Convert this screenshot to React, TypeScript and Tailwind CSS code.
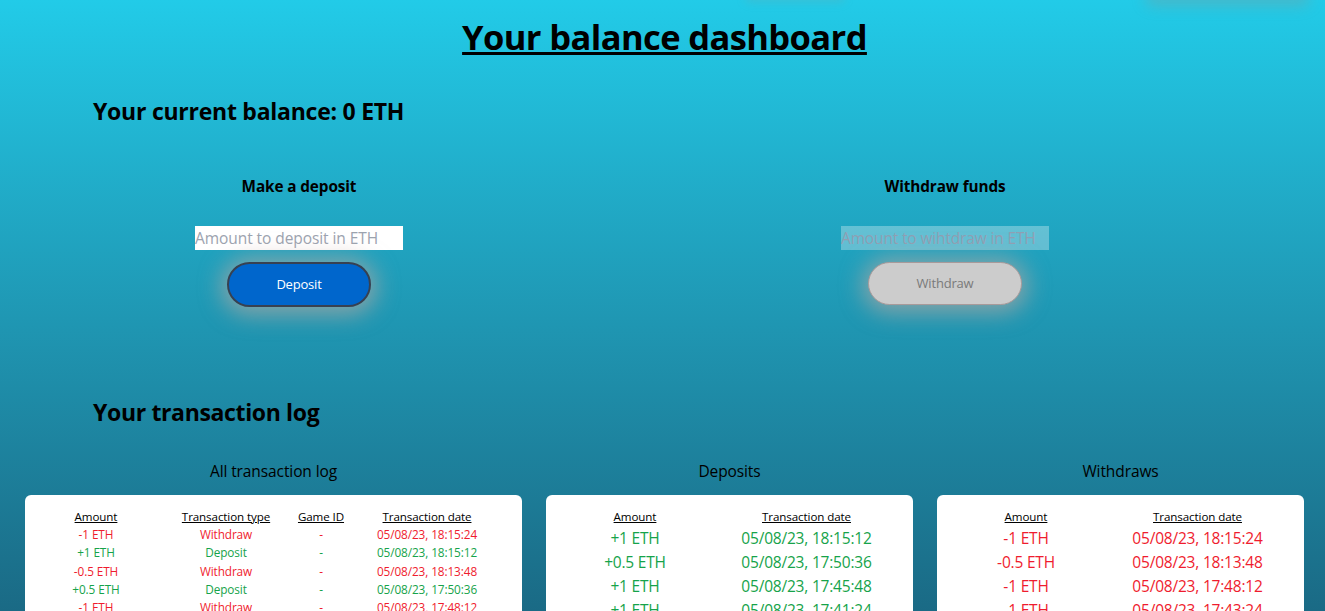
import React from "react";

interface Tx {
  amount: string;
  type: string;
  date: string;
}

const allTx: Tx[] = [
  { amount: "-1 ETH", type: "Withdraw", date: "05/08/23, 18:15:24" },
  { amount: "+1 ETH", type: "Deposit", date: "05/08/23, 18:15:12" },
  { amount: "-0.5 ETH", type: "Withdraw", date: "05/08/23, 18:13:48" },
  { amount: "+0.5 ETH", type: "Deposit", date: "05/08/23, 17:50:36" },
  { amount: "-1 ETH", type: "Withdraw", date: "05/08/23, 17:48:12" },
];

const deposits = [
  ["+1 ETH", "05/08/23, 18:15:12"],
  ["+0.5 ETH", "05/08/23, 17:50:36"],
  ["+1 ETH", "05/08/23, 17:45:48"],
  ["+1 ETH", "05/08/23, 17:41:24"],
];

const withdraws = [
  ["-1 ETH", "05/08/23, 18:15:24"],
  ["-0.5 ETH", "05/08/23, 18:13:48"],
  ["-1 ETH", "05/08/23, 17:48:12"],
  ["-1 ETH", "05/08/23, 17:43:24"],
];

const SmallTable = ({ rows, color }: { rows: string[][]; color: string }) => (
  <div className="bg-white rounded-md pt-[14px] pb-[10px]">
    <div className="grid grid-cols-[178px_165px] text-center text-[11.6px] leading-[16px] text-black underline tracking-[-0.1px]">
      <div>Amount</div>
      <div>Transaction date</div>
    </div>
    <div className={`pt-[1px] ${color}`}>
      {rows.map((row) => (
        <div
          key={row[1]}
          className="grid grid-cols-[178px_165px] text-center text-[15.5px] leading-[24px] tracking-[-0.2px]"
        >
          <div>{row[0]}</div>
          <div>{row[1]}</div>
        </div>
      ))}
    </div>
  </div>
);

const App = () => {
  return (
    <div className="relative h-[611px] overflow-hidden bg-gradient-to-b from-[#22cbe8] to-[#1a6a85] text-black font-['Open_Sans','Noto_Sans',sans-serif]">
      {/* faint smudges on the top edge */}
      <div className="absolute top-[-10px] left-[1145px] w-[165px] h-[16px] rounded-full bg-[#a08a80]/30 blur-[7px]" />
      <div className="absolute top-[-8px] left-[745px] w-[100px] h-[10px] rounded-full bg-[#a08a80]/20 blur-[5px]" />

      <h1 className="relative pl-[4px] text-center text-[34.5px] leading-[48px] pt-[13px] font-bold underline tracking-[-0.6px]">
        Your balance dashboard
      </h1>

      <h2 className="relative ml-[93px] mt-[34px] text-[23px] leading-[32px] font-bold tracking-[-0.25px]">
        Your current balance: 0 ETH
      </h2>

      <div className="flex gap-[234px] ml-[93px] mt-[49px]">
        <div className="w-[412px] flex flex-col items-center">
          <h3 className="text-[15.3px] leading-[20px] font-bold tracking-[-0.1px]">Make a deposit</h3>
          <input
            className="mt-[30px] w-[208px] h-[24px] bg-white text-[15.5px] outline-none placeholder:text-[#9ca3af] tracking-[-0.07px]"
            placeholder="Amount to deposit in ETH"
          />
          <button className="mt-[12px] pt-[1px] w-[144px] h-[45px] rounded-full bg-[#0066cc] border-2 border-[#374151] text-white text-[13px] tracking-[-0.2px] shadow-[0_2px_22px_6px_rgba(200,170,160,0.6)]">
            Deposit
          </button>
        </div>
        <div className="w-[412px] flex flex-col items-center">
          <h3 className="text-[15.3px] leading-[20px] font-bold tracking-[-0.1px]">Withdraw funds</h3>
          <input
            disabled
            className="mt-[30px] w-[208px] h-[24px] bg-white/30 text-[15.5px] outline-none placeholder:text-[#8f9fb3] tracking-[-0.15px]"
            placeholder="Amount to wihtdraw in ETH"
          />
          <button
            disabled
            className="mt-[12px] pt-[1px] w-[154px] h-[43px] rounded-full bg-[#cccccc] border border-[#a89a9a] text-[#7a7a7a] text-[13px] tracking-[-0.2px] shadow-[0_2px_22px_6px_rgba(200,170,160,0.6)]"
          >
            Withdraw
          </button>
        </div>
      </div>

      <h2 className="ml-[93px] mt-[89px] text-[23px] leading-[32px] font-bold tracking-[-0.35px]">
        Your transaction log
      </h2>

      <div className="flex gap-[24px] ml-[25px] mt-[33px]">
        <div className="w-[497px]">
          <p className="text-center text-[15.5px] leading-[20px] mb-[14px] tracking-[-0.1px]">All transaction log</p>
          <div className="bg-white rounded-md pt-[14px] pb-[10px]">
            <div className="grid grid-cols-[142px_118px_72px_140px] text-center text-[11.6px] leading-[16px] underline tracking-[-0.1px]">
              <div>Amount</div>
              <div>Transaction type</div>
              <div>Game ID</div>
              <div>Transaction date</div>
            </div>
            <div>
              {allTx.map((tx) => (
                <div
                  key={tx.date}
                  className={`grid grid-cols-[142px_118px_72px_140px] text-center text-[11.8px] leading-[18.25px] tracking-[-0.1px] ${
                    tx.type === "Deposit" ? "text-[#16a34a]" : "text-[#ef1c2e]"
                  }`}
                >
                  <div>{tx.amount}</div>
                  <div>{tx.type}</div>
                  <div>-</div>
                  <div>{tx.date}</div>
                </div>
              ))}
            </div>
          </div>
        </div>

        <div className="w-[367px]">
          <p className="text-center text-[15.5px] leading-[20px] mb-[14px] tracking-[-0.1px]">Deposits</p>
          <SmallTable rows={deposits} color="text-[#16a34a]" />
        </div>

        <div className="w-[367px]">
          <p className="text-center text-[15.5px] leading-[20px] mb-[14px] tracking-[-0.1px]">Withdraws</p>
          <SmallTable rows={withdraws} color="text-[#ef1c2e]" />
        </div>
      </div>
    </div>
  );
};

export default App;
